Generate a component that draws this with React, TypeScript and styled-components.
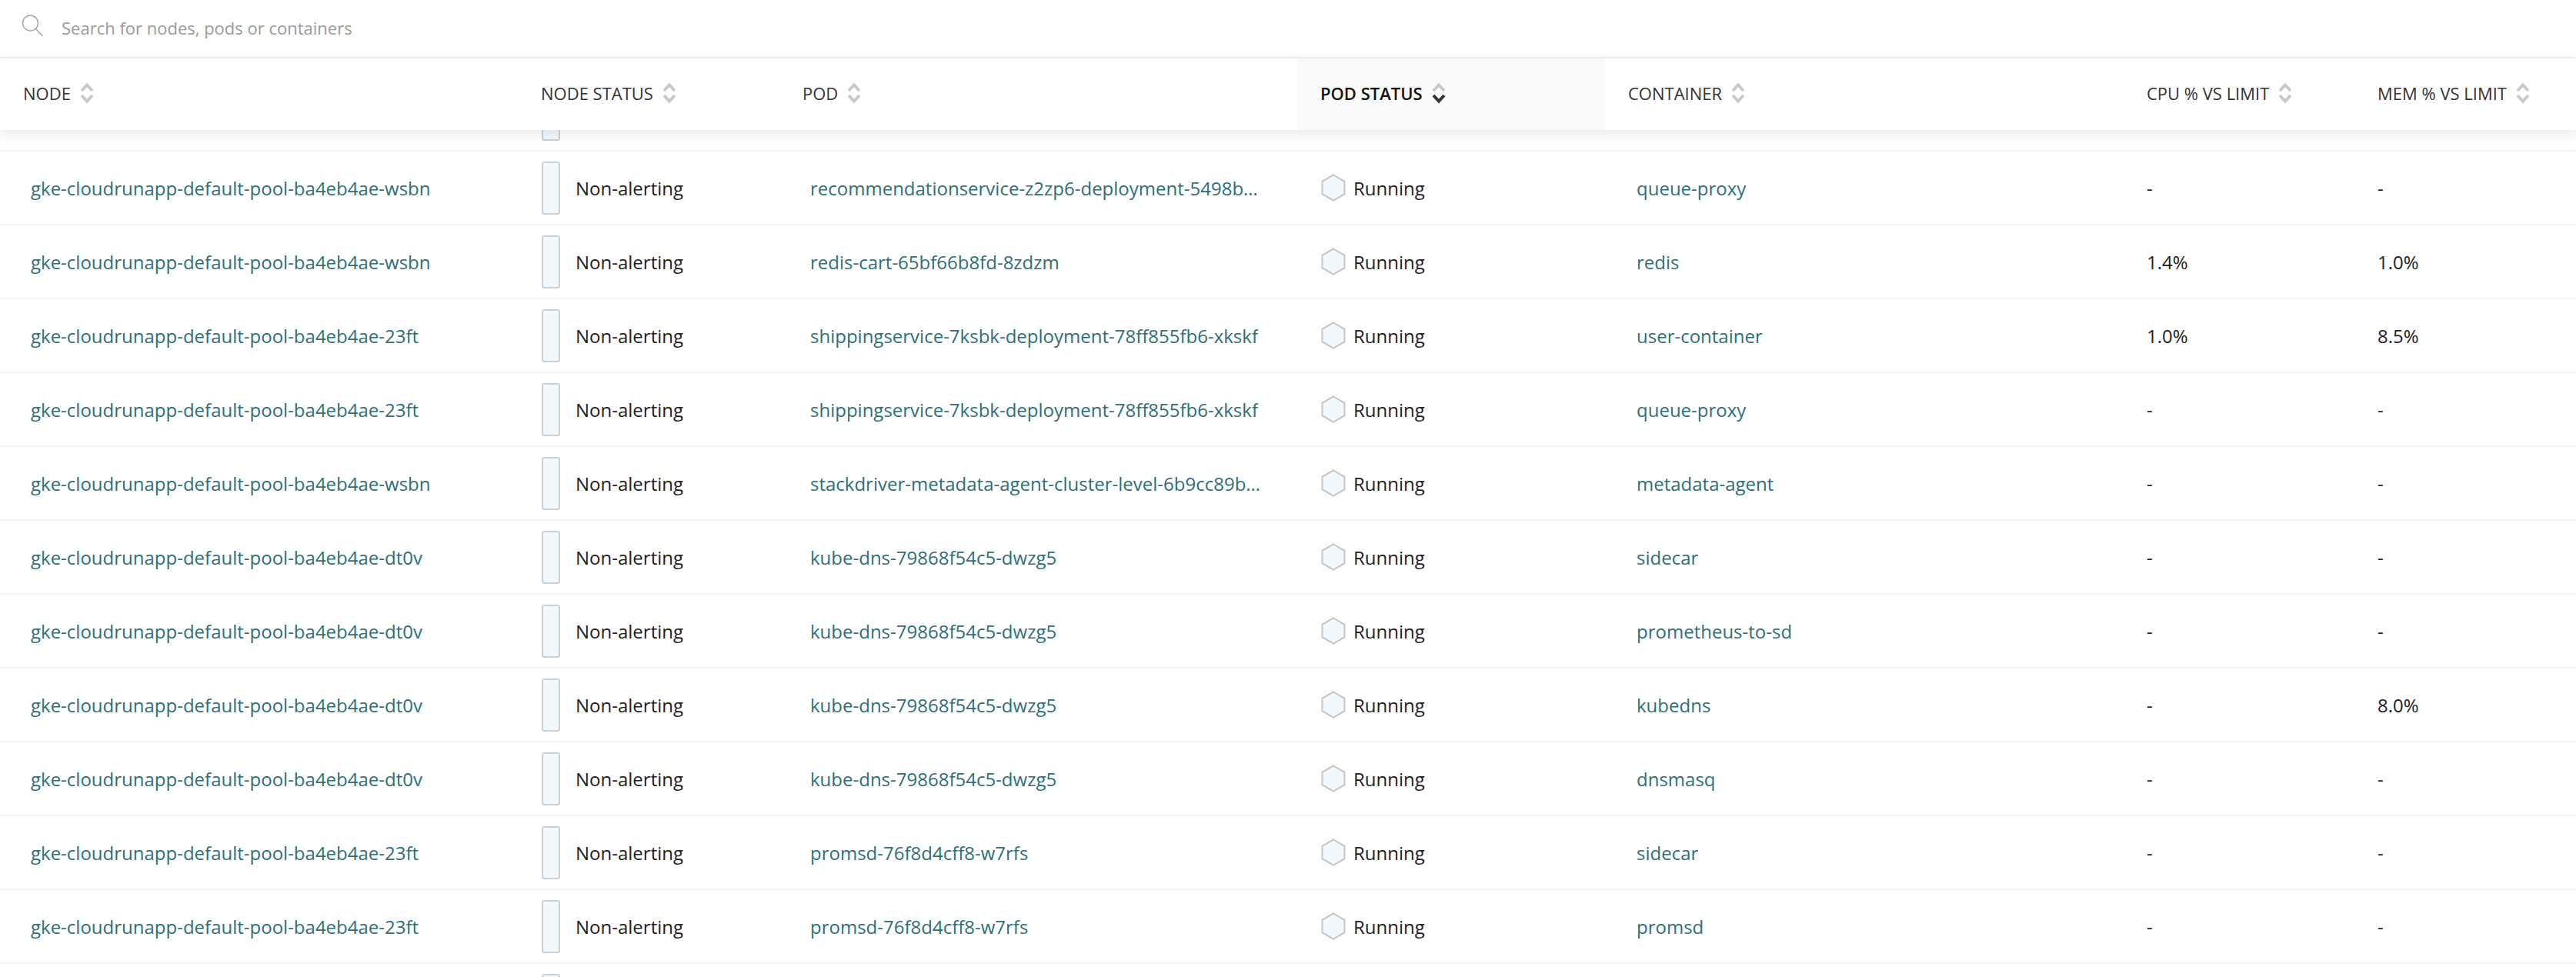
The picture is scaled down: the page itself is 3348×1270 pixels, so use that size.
import React from "react";
import styled, { createGlobalStyle } from "styled-components";

const Global = createGlobalStyle`
  html, body { margin: 0; padding: 0; background: #fff; }
  body { font-family: "Open Sans", "Liberation Sans", sans-serif; }
  * { box-sizing: border-box; }
`;

const COLUMNS = "673px 340px 673px 400px 674px 300px 288px";

const Page = styled.div`
  width: 3348px;
  height: 1270px;
  overflow: hidden;
  display: flex;
  flex-direction: column;
  background: #fff;
`;
const SearchBar = styled.div`
  flex: none;
  height: 76px;
  display: flex;
  align-items: center;
  gap: 23px;
  padding: 0 0 3px 28px;
  border-bottom: 2px solid #f3f3f3;
`;
const SearchText = styled.span`
  font-size: 22px;
  color: #9a9a9a;
`;
const SearchGlyph = styled.svg`
  flex: none;
  width: 29px;
  height: 29px;
  margin-bottom: 5px;
`;
const Header = styled.div`
  flex: none;
  height: 93px;
  display: grid;
  grid-template-columns: ${COLUMNS};
  background: #fff;
  position: relative;
  z-index: 2;
  box-shadow: 0 4px 18px rgba(0, 0, 0, 0.1);
`;
const HeaderCell = styled.div<{ $active?: boolean }>`
  display: flex;
  align-items: center;
  gap: 12px;
  padding: 0 0 3px 30px;
  font-size: 22px;
  font-weight: ${(p) => (p.$active ? 600 : 400)};
  color: ${(p) => (p.$active ? "#111" : "#333")};
  background: ${(p) => (p.$active ? "#fafafa" : "transparent")};
`;
const Body = styled.div`
  flex: 1;
  min-height: 0;
  overflow: hidden;
`;
const List = styled.div`
  margin-top: -68px;
`;
const Row = styled.div`
  height: 96px;
  display: grid;
  grid-template-columns: ${COLUMNS};
  border-bottom: 2px solid #f3f3f3;
`;
const Cell = styled.div<{ $pad: number }>`
  display: flex;
  align-items: center;
  min-width: 0;
  padding-left: ${(p) => p.$pad}px;
  font-size: 24px;
  color: #222;
`;
const LinkText = styled.span`
  color: #2d6f7a;
  display: block;
  max-width: 590px;
  overflow: hidden;
  white-space: nowrap;
  text-overflow: ellipsis;
`;
const StatusBar = styled.span`
  flex: none;
  width: 24px;
  height: 69px;
  margin-right: 20px;
  background: #f2f8fb;
  border: 2px solid #cfd2d4;
  border-radius: 3px;
`;
const Hex = styled.svg`
  flex: none;
  width: 32px;
  height: 36px;
  margin-right: 10px;
`;

const SortIcon = ({ active }: { active?: boolean }) => (
  <svg width="18" height="28" viewBox="0 0 18 28" fill="none" strokeWidth="4">
    <path d="M2 11 L9 3.5 L16 11" stroke="#c9c9c9" />
    <path d="M2 17 L9 24.5 L16 17" stroke={active ? "#333" : "#c9c9c9"} />
  </svg>
);

const SearchIcon = () => (
  <SearchGlyph viewBox="0 0 29 29" fill="none" stroke="#a8a8a8" strokeWidth="1.5">
    <circle cx="11.5" cy="11" r="10" />
    <path d="M18.5 18.5 L27.5 28" />
  </SearchGlyph>
);

const headers = ["NODE", "NODE STATUS", "POD", "POD STATUS", "CONTAINER", "CPU % VS LIMIT", "MEM % VS LIMIT"];

const A = "gke-cloudrunapp-default-pool-ba4eb4ae-wsbn";
const B = "gke-cloudrunapp-default-pool-ba4eb4ae-23ft";
const C = "gke-cloudrunapp-default-pool-ba4eb4ae-dt0v";
const SHIP = "shippingservice-7ksbk-deployment-78ff855fb6-xkskf";
const DNS = "kube-dns-79868f54c5-dwzg5";
const PROM = "promsd-76f8d4cff8-w7rfs";

type R = [string, string, string, string, string];
const rows: R[] = [
  [A, "recommendationservice-z2zp6-deployment-5498bd7c9f-x2k9p", "queue-proxy", "-", "-"],
  [A, "redis-cart-65bf66b8fd-8zdzm", "redis", "1.4%", "1.0%"],
  [B, SHIP, "user-container", "1.0%", "8.5%"],
  [B, SHIP, "queue-proxy", "-", "-"],
  [A, "stackdriver-metadata-agent-cluster-level-6b9cc89bd7-lm4qt", "metadata-agent", "-", "-"],
  [C, DNS, "sidecar", "-", "-"],
  [C, DNS, "prometheus-to-sd", "-", "-"],
  [C, DNS, "kubedns", "-", "8.0%"],
  [C, DNS, "dnsmasq", "-", "-"],
  [B, PROM, "sidecar", "-", "-"],
  [B, PROM, "promsd", "-", "-"],
];

const PartialRow = () => (
  <Row>
    <Cell $pad={40} />
    <Cell $pad={31}><StatusBar /></Cell>
  </Row>
);

export default function App() {
  return (
    <Page>
      <Global />
      <SearchBar>
        <SearchIcon />
        <SearchText>Search for nodes, pods or containers</SearchText>
      </SearchBar>
      <Header>
        {headers.map((h) => (
          <HeaderCell key={h} $active={h === "POD STATUS"}>
            {h}
            <SortIcon active={h === "POD STATUS"} />
          </HeaderCell>
        ))}
      </Header>
      <Body>
        <List>
          <PartialRow />
          {rows.map((r, i) => (
            <Row key={i}>
              <Cell $pad={40}><LinkText>{r[0]}</LinkText></Cell>
              <Cell $pad={31}><StatusBar />Non-alerting</Cell>
              <Cell $pad={40}><LinkText>{r[1]}</LinkText></Cell>
              <Cell $pad={31}>
                <Hex viewBox="0 0 32 36">
                  <path d="M16 1.5 L30.5 9.8 V26.2 L16 34.5 L1.5 26.2 V9.8 Z" fill="#f2f8fb" stroke="#c2c5c7" strokeWidth="2" />
                </Hex>
                Running
              </Cell>
              <Cell $pad={41}><LinkText>{r[2]}</LinkText></Cell>
              <Cell $pad={30}>{r[3]}</Cell>
              <Cell $pad={30}>{r[4]}</Cell>
            </Row>
          ))}
          <PartialRow />
        </List>
      </Body>
    </Page>
  );
}
